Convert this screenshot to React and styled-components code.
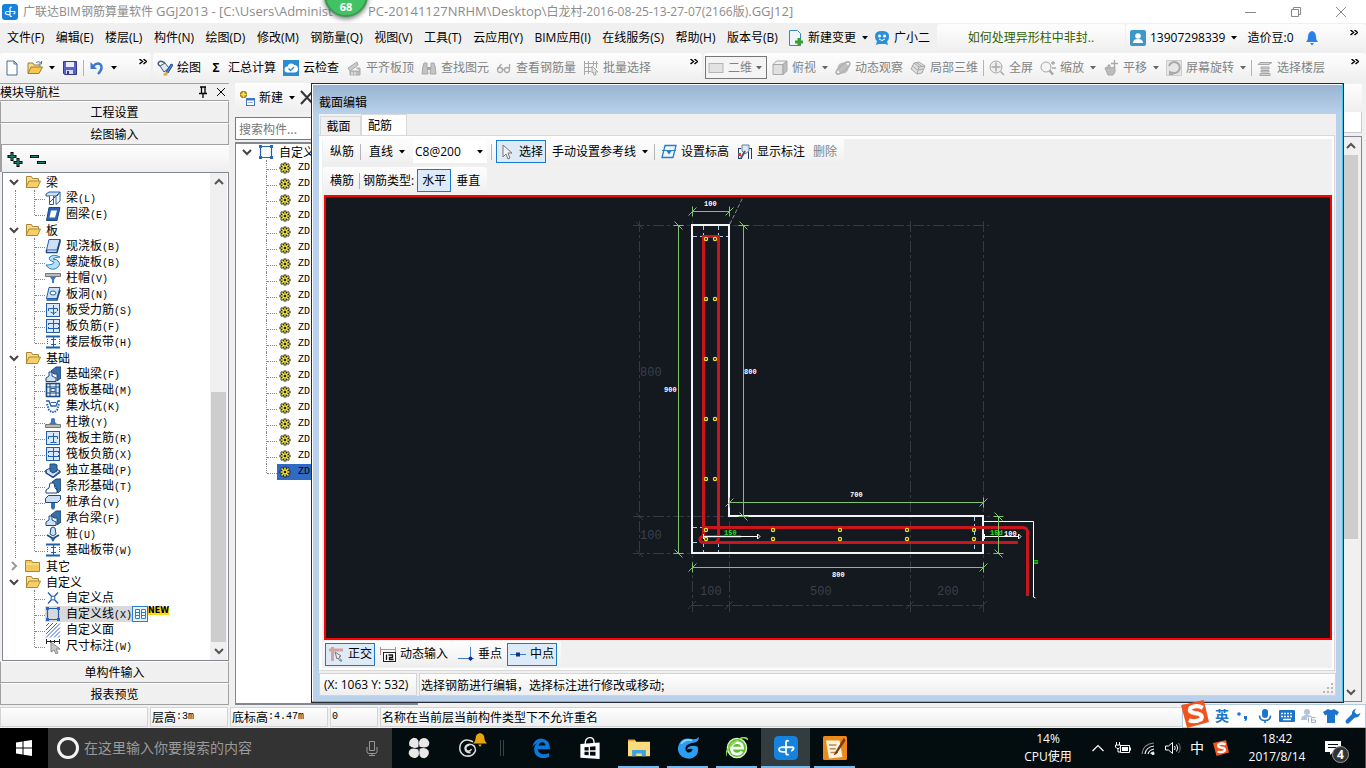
import React from "react";
import styled, { createGlobalStyle } from "styled-components";

const ui = `"Open Sans", "Noto Sans CJK SC", sans-serif`;
const song = `"Noto Sans CJK SC", sans-serif`;
const barFill = "linear-gradient(#fdfdfd, #f7f7f7 50%, #eeeeee)";

const GlobalStyle = createGlobalStyle`
  * { box-sizing: border-box; }
  body { margin: 0; background: #f0f0f0; }
  body, button, input, select { font-family: ${ui}; font-size: 12px; line-height: 16px; color: #000; }
  button { margin: 0; padding: 0; border: 0; background: none; white-space: nowrap; }
  svg { display: block; flex: none; }
  ul { list-style: none; margin: 0; padding: 0; }
`;

/* ---------- icons ---------- */

const B = "#1f5fae";
const D = "#1b4a80";
const L = "#cfe0f6";
const G = "#a8a8a8";

const glyphs = {
  app: (
    <>
      <rect width="16" height="16" rx="3" fill="#1583dd" />
      <path d="M9.800 3.500Q8 2.500 8 4.500V11q0 2 1.800 1.300M13 7.500H5q-2 .5-1.600 2Q4 11 8 10.500M13 7.500q.3 2-1.600 2.500" fill="none" stroke="#fff" strokeWidth="1.200" />
    </>
  ),
  file: (
    <>
      <path d="M3 1h7l3 3v11H3z" fill="#fff" stroke="#4a6a94" />
      <path d="M10 1v3h3" fill="none" stroke="#4a6a94" />
    </>
  ),
  folderOpen: (
    <>
      <path d="M1 13V3h5l1 2h6v3" fill="#f6dc8c" stroke="#a08030" />
      <path d="M1 13.500L4 7h11.500L12 13.500z" fill="#f8c552" stroke="#a08030" />
      <path d="M9 2.500q3-2 5 .5M14.500 1v3h-3" fill="none" stroke="#55749c" />
    </>
  ),
  folder: (
    <>
      <path d="M.5 13.500V2.500h6l1 2h7v9z" fill="#f3c95c" stroke="#a98733" />
      <path d="M1 6h13" stroke="#fdeab0" />
    </>
  ),
  folderTree: (
    <>
      <path d="M1.500 13V2.500h5l1 2h6V7" fill="#f6dc8c" stroke="#a98733" />
      <path d="M1 13.500L4 7h11.500L12.500 13.500z" fill="#f8cf66" stroke="#a98733" />
    </>
  ),
  save: (
    <>
      <path d="M1.500 1.500h13v13h-12l-1-1z" fill="#5b62c9" stroke="#33398a" />
      <path d="M4 2h8v5H4z" fill="#e8ecfb" />
      <path d="M4 10h7v4H4z" fill="#d7dbf2" />
      <path d="M5 11h2v3H5z" fill="#33398a" />
    </>
  ),
  undo: (
    <>
      <path d="M4 6.500q4-4.500 7.500-2 3 4-2.500 9.500" fill="none" stroke="#3d78cf" strokeWidth="2.400" />
      <path d="M1.500 2v7H8z" fill="#3d78cf" />
    </>
  ),
  draw: (
    <>
      <path d="M3 6l5-3 4 5-5 4z" fill="#dfe8f2" stroke="#405d80" />
      <path d="M3 6Q0 4 2 2t6 1" fill="none" stroke="#405d80" strokeWidth="1.500" />
      <path d="M9 12l5-8 2 1-5 8z" fill="#4c86cf" stroke="#27538f" />
      <path d="M6 14.500q2-3 5-2l-1 3q-3 1-4-1z" fill="#e0b13c" />
    </>
  ),
  cloud: (
    <>
      <rect width="16" height="16" fill="#2b8bd3" />
      <path d="M4.500 12.500a3 3 0 010-6 4 4 0 017-1.500 3.800 3.800 0 01.5 7.500z" fill="#fff" />
      <path d="M5.500 8.500l2 2 3.500-3.500" fill="none" stroke="#2b8bd3" strokeWidth="1.300" />
    </>
  ),
  level: (
    <>
      <path d="M2 8l9-6 1 3-8 6z" fill="#ccc" stroke={G} />
      <path d="M4 11h10v4H4zM10 8h4v3" fill="#bbb" stroke={G} />
      <path d="M6 15v-3M9 15v-3" stroke="#eee" />
    </>
  ),
  binoc: (
    <>
      <path d="M3 3h3v3l1 8H1l1-8zM10 3h3l1 3 1 8H9l1-8z" fill="#c4c4c4" stroke={G} />
      <path d="M6 7h4v3H6z" fill={G} />
    </>
  ),
  glasses: (
    <g fill="none" stroke={G} strokeWidth="1.300">
      <circle cx="4" cy="10" r="2.500" />
      <circle cx="11" cy="10" r="2.500" />
      <path d="M6.500 9.500h2M1.500 9l4-5M13.500 9V4" />
    </g>
  ),
  batch: (
    <>
      <path d="M1.500 1v14M5.500 1v13M1 3.500h14M1 7.500h9M1 11.500h7M10.500 1v5M13.500 1v7" stroke={G} fill="none" />
      <path d="M9 6l6 6-3 0 1 3-2 0-1-3-1 1z" fill="#e4e4e4" stroke={G} />
    </>
  ),
  flat: <rect x="1" y="3.500" width="14" height="9" fill="#e2e2e2" stroke="#b5b5b5" />,
  cube: (
    <g stroke={G}>
      <path d="M1 4.500h10v10H1z" fill="#e0e0e0" />
      <path d="M1 4.500L4.500 1H15l-4 3.500z" fill="#f2f2f2" />
      <path d="M11 4.500L15 1v10l-4 3.500z" fill="#bdbdbd" />
    </g>
  ),
  orbit: (
    <>
      <circle cx="8" cy="8" r="5.500" fill="#c0c0c0" />
      <ellipse cx="8" cy="8" rx="8.500" ry="3" transform="rotate(-40 8 8)" fill="none" stroke="#b0b0b0" strokeWidth="1.500" />
    </>
  ),
  local3d: (
    <g stroke={G} fill="#dedede">
      <path d="M1 9l3-6 5-1 6 4-3 7-5 1z" />
      <path d="M4 3l5 4-2 7M9 7l6-1M2.500 6l5 4 6-1M6 2.500l6 4" fill="none" />
    </g>
  ),
  fit: (
    <>
      <circle cx="7" cy="7" r="6" fill="#eee" stroke={G} />
      <path d="M7 2.500v9M2.500 7h9M11.500 11.500L15 15" stroke={G} strokeWidth="1.500" />
    </>
  ),
  zoom: (
    <>
      <circle cx="6" cy="7" r="5" fill="#f4f4f4" stroke={G} />
      <path d="M9.500 10.500L13 14.500" stroke={G} strokeWidth="2.500" />
      <path d="M11 3h4M13 1v4M12 8h4" stroke={G} strokeWidth="1.300" />
    </>
  ),
  pan: (
    <>
      <path d="M2 8l2-1 1 2V5h2v3l5-1v5l-2 3H5z" fill="#bdbdbd" stroke={G} />
      <path d="M8 3.500h7M11.500 0v7" stroke={G} strokeWidth="1.300" />
    </>
  ),
  rotate: (
    <>
      <path d="M.5.5h15v15H.5z" fill="#e6e6e6" stroke="#ccc" />
      <path d="M3 6a5.500 5.500 0 11 2 6" fill="none" stroke={G} strokeWidth="2" />
      <path d="M3 10v5h5z" fill={G} />
    </>
  ),
  floors: (
    <g fill="#d4d4d4" stroke={G}>
      <path d="M3 2.500h12l-3 2H1zM4 7h8v2H4zM4 10.500h8v1.500H4zM3 13.500h10v2H3z" />
    </g>
  ),
  newChange: (
    <>
      <path d="M1.500.5h8l3 3v12h-11z" fill="#eef6fd" stroke="#3b86c4" />
      <path d="M11 8v8M7 12h8" stroke="#3aa02a" strokeWidth="3" />
    </>
  ),
  robot: (
    <>
      <path d="M1 6q0-5 7-5t7 5-2 5l1 4-3-1H5l-3 1 1-4Q1 10 1 6z" fill="#2b90d9" />
      <circle cx="5.500" cy="6" r="1.500" fill="#fff" />
      <circle cx="10.500" cy="6" r="1.500" fill="#fff" />
      <path d="M5 9q3 3 6 0" fill="none" stroke="#fff" />
    </>
  ),
  user: (
    <>
      <rect width="16" height="16" rx="2" fill="#3f96cb" />
      <circle cx="8" cy="6" r="2.800" fill="#fff" />
      <path d="M3 13q0-4 5-4t5 4z" fill="#fff" />
    </>
  ),
  bell: <path d="M8 1q4 1 4 6 0 3 2 5H2q2-2 2-5 0-5 4-6zM6 13h4l-2 2.500z" fill="#2c7fe8" />,
  addItem: (
    <>
      <path d="M4.500 1v7M1 4.500h7" stroke="#806000" strokeWidth="4" />
      <path d="M4.500 1.500v6M1.500 4.500h6" stroke="#ffe14a" strokeWidth="2" />
      <rect x="7.500" y="8.500" width="8" height="7" fill="#fff" stroke="#3f77c2" />
      <path d="M7 9.500h9" stroke="#3f77c2" strokeWidth="2" />
      <path d="M9 12.500h5" stroke="#8ab0e0" />
    </>
  ),
  cross: <path d="M2 1l12 13M14 1L2 14" stroke="#333" strokeWidth="2" fill="none" />,
  frame: (
    <>
      <path d="M2.500 2.500h11v11h-11z" fill="none" stroke={B} strokeWidth="1.200" />
      <path d="M1 1h3v3H1zM12 1h3v3h-3zM1 12h3v3H1zM12 12h3v3h-3z" fill="#2b67c8" />
    </>
  ),
  gear: (
    <>
      <path d="M8 2.500v11M2.500 8h11M4 4l8 8M12 4l-8 8" stroke="#222" strokeWidth="2.600" />
      <circle cx="8" cy="8" r="4.500" fill="#222" />
      <path d="M8 3.500v9M3.500 8h9M4.500 4.500l7 7M11.500 4.500l-7 7" stroke="#f5e63c" strokeWidth="1.500" />
      <circle cx="8" cy="8" r="1.300" fill="#222" />
    </>
  ),
  beam: (
    <>
      <path d="M1 4l3-2h11l-3 4H1z" fill={L} stroke={B} />
      <path d="M4.500 6v8.500h4V6M12 6l3-4v9l-4 3.500V6" fill="#fff" stroke={B} />
      <path d="M5 12l8-8" stroke={B} />
    </>
  ),
  ring: (
    <>
      <path d="M4 1.500h11L12 14.500H1.500z" fill="#2e62b4" stroke={D} />
      <path d="M6 4.500h6L10 11.500H4.500z" fill="#fff" />
    </>
  ),
  slab: (
    <>
      <path d="M4 1.500h11L12 12H1.500z" fill={L} stroke={B} />
      <path d="M1.500 12v2.500H12L15 4V1.500" fill="none" stroke={D} strokeWidth="1.500" />
    </>
  ),
  spiral: <path d="M15 3Q8-1 4 4q0 3 5 4 0 3-8 3 3 5 9 4 6-3 4-7-2-3-6-3 2-2 7-2z" fill="#b5e0f7" stroke="#2a80c4" />,
  cap: (
    <>
      <path d="M.5 3.500h15v3H.5z" fill="#bbb" stroke="#777" />
      <path d="M5 7h6l-2 3v3H7v-3z" fill="#3d78c8" />
    </>
  ),
  hole: (
    <>
      <path d="M4 1.500h11L12 12.500H1.500z" fill={L} stroke={B} />
      <path d="M1.500 14H12l3-10" fill="none" stroke={D} strokeWidth="1.500" />
      <ellipse cx="8" cy="7" rx="3" ry="2" fill="#fff" stroke={B} />
    </>
  ),
  rebarA: (
    <>
      <rect x="1.500" y="1.500" width="13" height="13" fill="#dbe7fa" stroke={B} />
      <path d="M8.500 3v10M3.500 9V6.500h9V9M5.500 10q3 3 6 0" stroke={B} fill="none" />
    </>
  ),
  rebarMain: (
    <>
      <rect x="1.500" y="1.500" width="13" height="13" fill="#dbe7fa" stroke={B} />
      <path d="M8.500 3v9.500h3M3.500 9V6.500h9V9M5.500 12.500h3" stroke={B} fill="none" />
    </>
  ),
  rebarB: (
    <>
      <rect x="1.500" y="1.500" width="13" height="13" fill="#dbe7fa" stroke={B} />
      <path d="M8.500 2v12M3 5.500h11M3 10.500h11M3.500 5v2M13.500 5v2M3.500 9v2M13.500 9v2" stroke={B} fill="none" />
    </>
  ),
  strip: (
    <>
      <path d="M1 2.500h14M1 13.500h14" stroke={B} strokeWidth="2" />
      <path d="M8.500 3v10M6 5.500h5M6 10.500h5" stroke={B} fill="none" />
      <path d="M2.500 5v6M14.500 5v6" stroke={B} strokeDasharray="1 1" />
    </>
  ),
  footing: (
    <>
      <path d="M6 5l5-4h5v11l-4 3V8H9z" fill="#3a6ea8" stroke={D} />
      <path d="M1 15.500V12l3-2V6h3v4l4 2v3.500z" fill={L} stroke={D} />
    </>
  ),
  raft: (
    <>
      <rect x="1.500" y="1.500" width="13" height="13" fill="#e7effa" stroke={D} strokeWidth="1.600" />
      <path d="M5 2v12M11 2v12M2 5h12M2 11h12" stroke={D} />
      <rect x="6" y="6.500" width="4" height="3" fill="#fff" stroke={B} />
    </>
  ),
  pit: (
    <>
      <path d="M1 3h3l2 5h5l2-5h2" fill="none" stroke={B} strokeWidth="1.300" />
      <path d="M2 6l2 6q4 4 8 0l2-6" fill="none" stroke={B} strokeDasharray="1.500 1" strokeWidth="2" />
      <path d="M6 4.500h5" stroke={B} />
    </>
  ),
  pier: (
    <>
      <path d="M.5 10.500h15v3H.5z" fill="#bbb" stroke="#777" />
      <path d="M4 10l2-2V5q2-2 4 0v3l2 2z" fill="#3d78c8" />
    </>
  ),
  isolated: (
    <>
      <path d="M1 8l7-3 7 4-7 6-7-4z" fill={L} stroke={D} />
      <path d="M5 2h5l2 1v6L8 11 5 9z" fill="#3a6ea8" stroke={D} />
      <path d="M1 8v3l7 4.500 7-5V9" fill="none" stroke={D} strokeWidth="1.300" />
    </>
  ),
  stripBase: (
    <>
      <path d="M7 4l4-3h5v11l-3 3-2-6z" fill="#3a6ea8" stroke={D} />
      <path d="M1 15v-3l3-2 1-5h4l1 5 2 2v3z" fill="#fff" stroke={D} />
    </>
  ),
  pileCap: (
    <>
      <path d="M.5 4.500l3-3h12v4l-3 3H.5z" fill={L} stroke={D} />
      <path d="M6 9h4v5l-2 2-2-2z" fill="#3a6ea8" />
    </>
  ),
  pile: (
    <>
      <path d="M6 2q2-2 4 0l1 6-3 2-3-2z" fill={L} stroke={D} />
      <path d="M2 9l6 3.500L14 9" fill="none" stroke={D} strokeWidth="1.800" />
      <path d="M5.500 12h5L8 16z" fill={B} />
    </>
  ),
  pointX: (
    <>
      <path d="M3 2.500l10 11M13 2.500l-10 11" stroke={B} strokeWidth="1.300" />
      <circle cx="8" cy="8" r="2" fill="#fff" stroke={B} />
    </>
  ),
  hatch: <path d="M1 4l3-3M1 8l7-7M1 12l11-11M1 15.500L15 1.500M5 15.500L15 5.500M9 15.500l6-6M13 15.500l2-2" stroke="#2b67c8" />,
  dims: (
    <>
      <path d="M1 3.500h14M1.500 1v5M14.500 1v5M5.500 2v3M9.500 2v3" stroke="#222" />
      <path d="M6 4v10l3-2 2 4 2-1-2-4h4z" fill="#c8c8c8" stroke="#888" />
    </>
  ),
  book: (
    <>
      <rect x=".5" y=".5" width="15" height="15" fill="#e8f3ff" stroke="#2b7dd0" />
      <path d="M3.500 3.500h4v9h-4zM9.500 3.500h4v9h-4z" fill="#fff" stroke="#2b7dd0" />
      <path d="M4 6.500h3M4 9.500h3M10 6.500h3M10 9.500h3" stroke="#2b7dd0" />
    </>
  ),
  cursor: <path d="M4 1v12l3-3 2 5 2-1-2-5h4z" fill="#f2f2f2" stroke="#777" />,
  elev: (
    <>
      <path d="M4 1.500h11l-3 12H1z" fill="#eef6fd" stroke="#2a7cc4" strokeWidth="1.300" />
      <path d="M1 6.500h14" stroke="#2a7cc4" />
      <path d="M5.500 7h5L8 10.500z" fill="#2a7cc4" />
    </>
  ),
  showDim: (
    <>
      <path d="M1.500 4v11M14.500 4v11M11.500 6v9M1 4.500h3M12 4.500h3M1 14.500h4" stroke="#1d3f73" fill="none" />
      <path d="M5 1h7v6l-4 3-3-3z" fill="#dfe7f2" stroke="#6b7d96" />
      <path d="M8 7l-4 7" stroke="#556" strokeWidth="2" />
      <path d="M1 9h3v3H1z" fill="#d43a2f" />
    </>
  ),
  ortho: (
    <>
      <path d="M1 4h14M4.500 1v14" stroke="#dba0a0" strokeWidth="3" />
      <path d="M7 6l6 4-2 1 3 4-2 0-2-3-1 1z" fill="#eee" stroke="#777" />
    </>
  ),
  dynInput: (
    <>
      <path d="M.5 1v8M15.500 1v5M1 3.500h15" stroke="#b09090" />
      <rect x="3.500" y="6.500" width="12" height="9" fill="#fff" stroke="#222" />
      <path d="M6.500 8.500v5.500M8.500 9h4v2.500h-3v2h4" stroke="#111" strokeWidth="1.300" fill="none" />
    </>
  ),
  perp: (
    <>
      <path d="M0 12.500h16M12.500 1v14" stroke="#3c7fc8" />
      <circle cx="12.500" cy="12.500" r="2" fill="#1a2f8c" />
    </>
  ),
  mid: (
    <>
      <path d="M0 8.500h16" stroke="#3c7fc8" />
      <rect x="6" y="6.500" width="4" height="4" fill="#1a2f8c" />
    </>
  ),
  plusTree: (
    <>
      <path d="M5 1v9M.5 5.500h9M11 7v9M6.500 11.500h9" stroke="#000" strokeWidth="3" />
      <path d="M5 2v7M1.500 5.500h7M11 8v7M7.500 11.500h7" stroke="#118070" strokeWidth="1.500" />
    </>
  ),
  minusTree: (
    <>
      <path d="M0 5.500h9M7 11.500h9" stroke="#000" strokeWidth="3" />
      <path d="M1 5.500h7M8 11.500h7" stroke="#118070" strokeWidth="1.500" />
    </>
  ),
  pin: <path d="M5 3h6M6.500 3v6M10 3v6M4 9.500h8M8 10v4" stroke="#000" fill="none" strokeWidth="1.300" />,
  close: <path d="M4 4l8 8M12 4l-8 8" stroke="#000" fill="none" />,
  min: <path d="M2 8.500h11" stroke="#888" />,
  restore: <path d="M3.500 5.500h7v7h-7zM5.500 5V3.500h7v7H11" fill="none" stroke="#888" />,
  quit: <path d="M3 3l10 10M13 3L3 13" stroke="#888" />,
  start: <path d="M0 2.500l6.500-1v6H0zM7.500 1.300L16 0v7.500H7.500zM0 8.500h6.500v6L0 13.600zM7.500 8.500H16V16l-8.500-1.300z" fill="#fff" />,
  mic: <path d="M5.500 1.500h5v9h-5zM3 7v4.500q0 2 2 2h6q2 0 2-2V7M8 13.500V16M5 15.500h6" fill="none" stroke="#999" />,
  fan: (
    <g fill="#e8e8e8">
      <path d="M7.500 7.500Q3 9 1 6q-1-4 3-5.500 5 0 3.500 7z" />
      <path d="M8.500 7Q7 2.500 10 1q4-1 5.500 3 0 5-7 3z" />
      <path d="M8.500 8.500Q13 7 15 10q1 4-3 5.500-5 0-3.500-7z" />
      <path d="M7.500 9Q9 13.500 6 15q-4 1-5.500-3 0-5 7-3z" />
    </g>
  ),
  swirl: (
    <>
      <path d="M12 3Q5-.500 2 5q-2 6 3 9 7 2 9-4 0-5-5-5-4 1-3 4 2 3 5 0" fill="none" stroke="#ddd" strokeWidth="1.200" />
      <path d="M9 5.500q-3 0-3 3t4 3" fill="none" stroke="#ddd" strokeWidth="1.600" />
    </>
  ),
  edge: (
    <path d="M1 7q2-7 8-6.500Q15 1 15.200 9H5.500q.5 3.500 4 4 3 .3 5-1v3q-3 1.500-6 1-6-1-6-7 0-3 2.500-5Q3 5 1 7zm5-1h5.500q0-2.500-2.500-2.700Q6.500 3.500 6 6z" fill="#0c78d8" />
  ),
  store: (
    <>
      <path d="M1 5l14-1v12l-14-1z" fill="#fff" />
      <path d="M4.500 5q0-4 3-4.500Q11 0 11 4.500" fill="none" stroke="#fff" />
      <path d="M4 7.500l3-.3v2.600H4zM8 7l4-.3v3H8zM4 10.700h3v2.600l-3-.3zM8 10.700h4v3l-4-.3z" fill="#030c0f" />
    </>
  ),
  explorer: (
    <>
      <path d="M0 2h5l1 1.500h10V14H0z" fill="#fbdb7c" />
      <path d="M0 2h5v1H0z" fill="#e0a93a" />
      <path d="M3 14V9.500h10V14h-3v-2H6v2z" fill="#3ba3dd" />
    </>
  ),
  gBlue: (
    <>
      <path d="M16 0q-2 2-5 1.500Q4 0 1.500 5-1 11 4 14.500q6 3 10-1 2-3 1-6.500-2-1-5-.5-2 .5-3 2.500 3-1 4.500 0Q10 12 7.500 11 5 9 7 6q3-2 6-2 3-1 3-4z" fill="#2c9df0" />
      <path d="M3 5q3-4 8-2.500" fill="none" stroke="#8fd6ff" strokeWidth="1.200" />
    </>
  ),
  greenE: (
    <>
      <circle cx="8" cy="8" r="7" fill="#5cbf2c" stroke="#dff5cc" />
      <path d="M4 8h8q0-4-4-4T4 8q0 4.500 4 4.500 2.500 0 3.500-2" fill="none" stroke="#fff" strokeWidth="2" />
      <path d="M0 14Q-1 10 6 4t10-2" fill="none" stroke="#86d84e" strokeWidth="1.200" />
    </>
  ),
  notes: (
    <>
      <rect width="16" height="16" rx="1" fill="#ee8a1c" />
      <path d="M2 3h9l2 11-9 1z" fill="#fff4dc" />
      <path d="M4 6h5M4.500 8.500h4M5 11h5" stroke="#b78a50" />
      <path d="M14 1L8 11l-1 2 2-1 6-9z" fill="#7a3b14" />
    </>
  ),
  caretUp: <path d="M2.500 11L8 5.500l5.500 5.500" fill="none" stroke="#fff" strokeWidth="1.200" />,
  battery: (
    <>
      <path d="M5.500 5.500h9v7h-9z" fill="none" stroke="#fff" />
      <path d="M7 7h6v4H7zM15 7.500h1v3h-1z" fill="#fff" />
      <path d="M1.500 2v3M4.500 2v3M.5 5h5v2l-1.500 1.500h-2L.5 7zM3 8v4h2" stroke="#fff" fill="none" />
    </>
  ),
  wifi: (
    <g fill="none" stroke="#eee" strokeWidth="1.200">
      <path d="M2 14Q3 4 14 3" stroke="#888" />
      <path d="M5 14q1-7 9-8M8 14q1-4 6-5M11 14q0-2 3-2" />
      <circle cx="13" cy="13.500" r="1" fill="#fff" />
    </g>
  ),
  volume: (
    <g fill="none" stroke="#fff">
      <path d="M.5 6h3l4-3.500v11L3.500 10h-3zM9.500 6q1.500 2 0 4M11.500 4.500q2.500 3.500 0 7" />
      <path d="M13.500 3q3.500 5 0 10" stroke="#777" />
    </g>
  ),
  sogou: (
    <>
      <path d="M0 3l13-3 3 12.500L3.500 16z" fill="#f0531c" />
      <path d="M12.500 4.500Q9 2.500 5.500 4.500 4 7 8 7.500q5 .5 3.500 3.500Q8 13 4.500 11.500" fill="none" stroke="#fff" strokeWidth="2.400" />
    </>
  ),
  notify: <path d="M0 1h16v11H8l-3 3v-3H0zM3 4v1h10V4zM3 7v1h10V7z" fill="#fff" fillRule="evenodd" />,
  imeMic: (
    <>
      <rect x="5" y="1" width="6" height="9" rx="3" fill="#1d74cc" />
      <path d="M2.500 7.500q0 5 5.500 5t5.500-5M8 12.500V15" fill="none" stroke="#1d74cc" strokeWidth="1.600" />
    </>
  ),
  keyboard: (
    <>
      <rect x="0" y="2" width="16" height="12" rx="1" fill="#1d74cc" />
      <path d="M2 5.500h12M2 8.500h12" stroke="#fff" strokeWidth="1.500" strokeDasharray="2 1" />
      <path d="M4 11.500h8" stroke="#fff" strokeWidth="1.500" />
    </>
  ),
  person: (
    <>
      <circle cx="6" cy="4" r="3" fill="#b5c3d8" />
      <path d="M0 12q0-5 6-5t6 5z" fill="#b5c3d8" />
      <rect x="6" y="9" width="10" height="6" fill="#fff" />
      <path d="M7.500 9.500v5M14.500 9.500h-4v5h4V12h-4" fill="none" stroke="#9fb0c8" />
    </>
  ),
  shirt: <path d="M5 1q3 2 6 0l5 3-2 3.500-2-1V15H4V6.500l-2 1L0 4z" fill="#1d74cc" />,
  wrench: <path d="M1 15q-1-2 0-3l6-6q-.5-4 4-5.500L9.500 4l2.500 2.500L15.500 5q-1.500 5-5.500 4.500L4 15q-1.500 1-3 0z" fill="#1d74cc" />,
  punct: (
    <>
      <circle cx="4" cy="6" r="1.800" fill="#1d74cc" />
      <path d="M9 8h3v3q0 2-3 2 1.500-1 1-2H9z" fill="#1d74cc" />
    </>
  ),
};

const Icon = ({ name, size = 16 }) => (
  <svg width={size} height={size} viewBox="0 0 16 16" aria-hidden="true">
    {glyphs[name]}
  </svg>
);

const Caret = ({ color = "#000" }) => (
  <svg width="6" height="4" viewBox="0 0 6 4" aria-hidden="true">
    <path d="M0 0h6L3 3.500z" fill={color} />
  </svg>
);

const More = () => (
  <svg width="8" height="6" viewBox="0 0 8 6" aria-hidden="true">
    <path d="M.5 0l3 2.500-3 2.500M4.500 0l3 2.500-3 2.500" fill="none" stroke="#000" strokeWidth="1.500" />
  </svg>
);

const Chevron = ({ d, color = "#555" }) => (
  <svg width="10" height="10" viewBox="0 0 10 10" aria-hidden="true">
    <path d={d} fill="none" stroke={color} strokeWidth="2" />
  </svg>
);
const DOWN = "M1 3l4 4 4-4";
const UP = "M1 7l4-4 4 4";
const RIGHT = "M3 1l4 4-4 4";

/* ---------- frame ---------- */

const Page = styled.div`
  display: flex;
  flex-direction: column;
  min-height: 100vh;
  position: relative;
  overflow: hidden;
`;

const TitleBar = styled.header`
  display: flex;
  align-items: center;
  height: 23px;
  padding: 0 17px 0 2px;
  gap: 5px;
  background: #fff;
  color: #8c8c8c;
  white-space: nowrap;
`;

const TitleText = styled.div`
  display: flex;
`;

const TitlePart = styled.span`
  width: ${(p) => (p.$lead ? "345px" : "auto")};
`;

const Latin = styled.span`
  font-size: 13px;
`;

const WindowButtons = styled.div`
  display: flex;
  gap: 29px;
  margin-left: auto;
`;

const SpeedBall = styled.div`
  position: absolute;
  left: 324px;
  top: -27px;
  width: 44px;
  height: 44px;
  padding-top: 26px;
  border: 2px solid #3a9a50;
  border-radius: 50%;
  background: #43c263;
  box-shadow: 0 2px 5px #0008;
  color: #fff;
  font: bold 11px/12px "Open Sans", sans-serif;
  text-align: center;
`;

const MenuBar = styled.nav`
  display: flex;
  align-items: center;
  height: 30px;
  background: #f0f0f0;
`;

const Menus = styled.div`
  display: flex;
  justify-content: space-between;
  padding: 0 8px 0 7px;
  width: 786px;
  flex: none;
`;

const MenuPanel = styled.div`
  display: flex;
  align-items: center;
  flex: ${(p) => (p.$grow ? "1" : "none")};
  width: ${(p) => (p.$grow ? "auto" : "188px")};
  height: 28px;
  gap: 4px;
  margin-left: 1px;
  padding: 0 2px;
  border-radius: 3px;
  background: ${barFill};
`;

const ChangeTools = styled.div`
  display: flex;
  flex: none;
  gap: 2px;
  width: 150px;
`;

const Tool = styled.button`
  display: flex;
  align-items: center;
  flex: none;
  gap: 4px;
  height: 23px;
  padding: 0 ${(p) => (p.$roomy ? "4px" : "2px")};
  border: ${(p) => (p.$boxed ? "1px solid #1979ca" : "0")};
  background: ${(p) => (p.$boxed ? "#dcebf7" : "none")};
  color: ${(p) => (p.$dim ? "#838383" : "#000")};
`;

const CaretSlot = styled.span`
  margin-left: 2px;
`;

const Sigma = styled.b`
  width: 16px;
  text-align: center;
`;

const TipLink = styled.a`
  margin: 0 auto;
  color: #306000;
  text-decoration: none;
`;

const ToolRow = styled.div`
  display: flex;
  height: 30px;
  padding-bottom: 1px;
  gap: 2px;
  background: #f0f0f0;
`;

const ToolGroup = styled.div`
  display: flex;
  align-items: center;
  flex: ${(p) => (p.$grow ? "1" : "none")};
  width: ${(p) => (p.$w ? p.$w + "px" : "auto")};
  gap: ${(p) => p.$gap || 3}px;
  padding: 0 ${(p) => p.$pad || 2}px;
  border-radius: 3px;
  background: ${barFill};
`;

const Sep = styled.span`
  flex: none;
  width: 1px;
  height: 16px;
  background: #b4b4b4;
`;

const PushEnd = styled.span`
  margin-left: auto;
  align-self: flex-start;
  padding: 6px ${(p) => (p.$inset ? "6px" : "2px")} 0 0;
`;

const Combo = styled.label`
  display: flex;
  align-items: center;
  flex: none;
  height: 23px;
  width: ${(p) => p.$w}px;
  padding: 0 4px 0 2px;
  gap: 4px;
  border: ${(p) => (p.$framed ? "1px solid #777" : "0")};
  background: ${(p) => (p.$framed ? "#f4f4f4" : "#fff")};
`;

const Select = styled.select`
  appearance: none;
  flex: 1;
  min-width: 0;
  padding: 0;
  border: 0;
  background: none;
  color: ${(p) => (p.$dim ? "#838383" : "#000")};
`;

const Workspace = styled.main`
  display: flex;
  flex: 1;
  position: relative;
`;

/* ---------- left navigation ---------- */

const NavPane = styled.aside`
  display: flex;
  flex-direction: column;
  flex: none;
  width: 229px;
  padding-bottom: 2px;
  font-family: ${song};
`;

const PaneHeader = styled.div`
  display: flex;
  align-items: center;
  height: 18px;
  border-top: 1px solid #a0a0a0;
  border-bottom: 1px solid #a0a0a0;
`;

const PaneTools = styled.div`
  display: flex;
  align-items: center;
  gap: 2px;
  margin-left: auto;
`;

const NavButton = styled.button`
  height: 22px;
  border: 1px solid #a0a0a0;
  border-top-color: #fff;
  background: #f0f0f0;
  font-family: ${song};
`;

const TreeTools = styled.div`
  display: flex;
  align-items: center;
  height: 27px;
  padding-left: 5px;
  gap: 7px;
  border-left: 2px solid #a0a0a0;
  background: ${barFill};
`;

const TreeBox = styled.div`
  display: flex;
  flex: 1;
  margin-left: 2px;
  padding-right: 1px;
  border: 1px solid #828790;
  background: #fff;
`;

const Tree = styled.ul`
  flex: 1;
  padding: 1px 0 4px;
`;

const Node = styled.li`
  display: flex;
  align-items: center;
  height: 16px;
  line-height: 16px;
  white-space: nowrap;
`;

const Expander = styled.span`
  display: flex;
  flex: none;
  justify-content: center;
  width: 22px;
`;

const Rail = styled.span`
  flex: none;
  width: 19px;
  height: 16px;
  margin-left: 12px;
  border-left: 1px dotted ${(p) => (p.$on ? "#888" : "transparent")};
`;

const Elbow = styled.span`
  flex: none;
  align-self: flex-start;
  width: 11px;
  height: ${(p) => (p.$last ? "9px" : "16px")};
  border-left: 1px dotted #888;

  &::before {
    content: "";
    display: block;
    height: 9px;
    border-bottom: 1px dotted #888;
  }
`;

const NodeLabel = styled.span`
  display: flex;
  align-items: center;
  height: 16px;
  gap: 5px;
  flex: ${(p) => (p.$wide ? "1" : "none")};
  background: ${(p) => p.$fill || "none"};
`;

const Key = styled.span`
  font: 10px/16px "Liberation Mono", monospace;
`;

const NewTag = styled.b`
  align-self: flex-start;
  height: 8px;
  margin-top: 1px;
  background: #ffd91f;
  font: bold 8px/8px "DejaVu Sans", sans-serif;
`;

const Scroll = styled.div`
  display: flex;
  flex-direction: column;
  align-items: center;
  justify-content: space-between;
  flex: none;
  width: 17px;
  padding: 4px 0;
  gap: 4px;
  background: #f0f0f0;
`;

const Thumb = styled.span`
  flex: none;
  width: 15px;
  height: ${(p) => p.$share};
  margin-top: ${(p) => (p.$end ? "auto" : "0")};
  margin-bottom: ${(p) => (p.$end ? "0" : "auto")};
  background: #cdcdcd;
`;

const nav = [
  { label: "梁", rail: true, items: [["beam", "梁", "(L)"], ["ring", "圈梁", "(E)"]] },
  {
    label: "板",
    rail: true,
    items: [
      ["slab", "现浇板", "(B)"], ["spiral", "螺旋板", "(B)"], ["cap", "柱帽", "(V)"], ["hole", "板洞", "(N)"],
      ["rebarA", "板受力筋", "(S)"], ["rebarB", "板负筋", "(F)"], ["strip", "楼层板带", "(H)"],
    ],
  },
  {
    label: "基础",
    rail: true,
    items: [
      ["footing", "基础梁", "(F)"], ["raft", "筏板基础", "(M)"], ["pit", "集水坑", "(K)"], ["pier", "柱墩", "(Y)"],
      ["rebarMain", "筏板主筋", "(R)"], ["rebarB", "筏板负筋", "(X)"], ["isolated", "独立基础", "(P)"],
      ["stripBase", "条形基础", "(T)"], ["pileCap", "桩承台", "(V)"], ["footing", "承台梁", "(F)"],
      ["pile", "桩", "(U)"], ["strip", "基础板带", "(W)"],
    ],
  },
  { label: "其它", closed: true, items: [] },
  {
    label: "自定义",
    items: [
      ["pointX", "自定义点", ""], ["frame", "自定义线", "(X)", true],
      ["hatch", "自定义面", ""], ["dims", "尺寸标注", "(W)"],
    ],
  },
];

const NavTree = () => (
  <Tree>
    {nav.map((g) => (
      <React.Fragment key={g.label}>
        <Node>
          <Expander>
            <Chevron d={g.closed ? RIGHT : DOWN} color={g.closed ? "#999" : "#444"} />
          </Expander>
          <NodeLabel>
            <Icon name={g.closed ? "folder" : "folderTree"} />
            {g.label}
          </NodeLabel>
        </Node>
        {g.items.map(([icon, text, key, active], i) => (
          <Node key={text}>
            <Rail $on={g.rail} />
            <Elbow $last={i === g.items.length - 1} />
            <NodeLabel $fill={active && "#d9d9d9"}>
              <Icon name={icon} />
              <span>{text}<Key>{key}</Key></span>
            </NodeLabel>
            {active && (
              <>
                <Icon name="book" />
                <NewTag>NEW</NewTag>
              </>
            )}
          </Node>
        ))}
      </React.Fragment>
    ))}
  </Tree>
);

/* ---------- component list ---------- */

const ListPane = styled.section`
  display: flex;
  flex-direction: column;
  flex: none;
  width: 183px;
  margin-left: 6px;
  padding-bottom: 2px;
  font-family: ${song};
`;

const ListTools = styled.div`
  display: flex;
  align-items: center;
  height: 29px;
  margin-bottom: 5px;
  padding-left: 2px;
  background: ${barFill};
`;

const SearchBox = styled.input`
  height: 23px;
  margin-bottom: 2px;
  padding: 0 3px;
  border: 1px solid #7a7a7a;
  background: #fff;
  font-family: ${song};
  &::placeholder { color: #777; opacity: 1; }
`;

const ListBox = styled.ul`
  flex: 1;
  border: 1px solid #828790;
  border-width: 2px 1px;
  background: #fff;
`;

const ListRail = styled.span`
  width: 30px;
  flex: none;
`;

/* ---------- right of the dialog ---------- */

const ViewPane = styled.section`
  display: flex;
  flex-direction: column;
  flex: 1;
  padding: 1px 4px 5px 2px;
`;

const ViewBar = styled.div`
  height: 28px;
  background: ${barFill};
`;

const ViewStrip = styled.div`
  height: 21px;
  margin-bottom: 3px;
  border-right: 1px solid #ccc;
  border-bottom: 1px solid #ccc;
  background: #fff;
`;

const ViewBox = styled.div`
  display: flex;
  flex: 1;
  justify-content: flex-end;
  padding-right: 2px;
  border: 1px solid #828790;
`;

/* ---------- dialog ---------- */

const Dialog = styled.section`
  position: absolute;
  top: 0;
  bottom: 4px;
  left: 311px;
  right: 22px;
  display: flex;
  flex-direction: column;
  padding: 0 7px 6px;
  border: 1px solid #262b33;
  background: #b9d1ea;
  box-shadow: inset -1px -1px #48c6e8, inset 1px 1px #fff;
`;

const DialogTitle = styled.h1`
  margin: 1px -6px 0;
  height: 29px;
  padding: 10px 6px 0;
  background: linear-gradient(#98b4d2, #b9d1ea);
  font-size: 12px;
  font-weight: normal;
  line-height: 16px;
`;

const DialogBody = styled.div`
  display: flex;
  flex-direction: column;
  flex: 1;
  min-height: 0;
  background: #f0f0f0;
`;

const Tabs = styled.div`
  display: flex;
  align-items: flex-end;
  height: 21px;
  padding-left: 1px;
`;

const Tab = styled.button`
  width: ${(p) => (p.$on ? "46px" : "41px")};
  height: ${(p) => (p.$on ? "21px" : "19px")};
  padding: 0 ${(p) => (p.$on ? "8px" : "4px")} 0 0;
  border: 1px solid #d9d9d9;
  border-bottom: 0;
  background: ${(p) => (p.$on ? "#fff" : "#f0f0f0")};
  font-family: ${song};
`;

const Pane = styled.div`
  display: flex;
  flex-direction: column;
  flex: 1;
  min-height: 0;
  margin-right: 1px;
  padding: 1px 1px 0 2px;
  border: 1px solid #d9d9d9;
  border-width: 1px 1px 1px 0;
  box-shadow: inset 3px 3px #fff, inset -2px -2px #fff;
`;

const PaneRow = styled.div`
  display: flex;
  flex: none;
  height: ${(p) => (p.$foot ? "30px" : "29px")};
  padding: ${(p) => (p.$foot ? "1px 2px 3px" : "1px 2px")};
`;

const Caption = styled.span`
  white-space: nowrap;
`;

const Canvas = styled.div`
  flex: 1;
  min-height: 0;
  margin: 0 1px 0 3px;
  border: 2px solid #f00;
  background: #14181f;
  svg { width: 100%; height: 100%; }
`;

const DialogStatus = styled.footer`
  display: flex;
  align-items: stretch;
  gap: 2px;
  height: 25px;
  padding-top: 2px;
`;

const Cell = styled.span`
  display: flex;
  align-items: center;
  flex: ${(p) => (p.$w ? "none" : "1")};
  width: ${(p) => (p.$w ? p.$w + "px" : "auto")};
  padding-left: ${(p) => p.$pad || 1}px;
  border: 1px solid #d4d4d4;
  background: ${barFill};
  font-family: ${(p) => (p.$latin ? ui : song)};
  white-space: nowrap;
`;

const Grip = styled.span`
  margin: auto 2px 2px auto;
`;

/* ---------- drawing ---------- */

const Num = styled.text`
  font: ${(p) => (p.$big ? "12px" : "bold 7px")} "Liberation Mono", monospace;
  fill: ${(p) => p.$c || "#fff"};
`;

const DimH = ({ x1, x2, y }) => (
  <path
    d={`M${x1} ${y}H${x2}M${x1} ${y - 5}v10M${x2} ${y - 5}v10M${x1 - 4} ${y + 4}l8-8M${x2 - 4} ${y + 4}l8-8`}
    stroke="#7fc468"
    fill="none"
  />
);

const DimV = ({ y1, y2, x }) => (
  <path
    d={`M${x} ${y1}V${y2}M${x - 5} ${y1}h10M${x - 5} ${y2}h10M${x - 4} ${y1 - 4}l8 8M${x - 4} ${y2 - 4}l8 8`}
    stroke="#7fc468"
    fill="none"
  />
);

const uprightDots = [239, 299, 359, 419, 479].flatMap((y) => [[706, y], [715, y]]);
const baseDots = [706, 773, 840, 907, 974].flatMap((x) => [[x, 530], [x, 539]]);

const SectionDrawing = () => (
  <svg viewBox="326 197 1004 440" preserveAspectRatio="xMidYMin meet" role="img" aria-label="截面配筋图">
    <path
      d="M633 225.500H989M633 516.500H1000M633 553.500H1000M692 605.500H985M639.500 221V556M692.500 221V612M729.500 221V612M910.500 221V612M983.500 221V612"
      stroke="#343a45"
      strokeDasharray="11 3 3 3"
      fill="none"
    />
    <path d="M688 609l8-8M725 609l8-8M906 609l8-8M979 609l8-8M636 222l7 7M636 513l7 7M636 550l7 7" stroke="#343a45" />
    <path d="M730 224L743 197" stroke="#888" strokeDasharray="4 2" />
    <path
      d="M703.500 226v10M718.500 226v10M693 236.500h10M719 236.500h10M693 527.500h10M693 542.500h10M703.500 543v10M718.500 543v10M974.500 517v36"
      stroke="#a8cdf0"
      strokeDasharray="4 3"
    />
    <path d="M692 225H729V516H983V553H692Z" fill="none" stroke="#f4f4f4" strokeWidth="2" />
    <g fill="none" stroke="#c9151c" strokeWidth="3">
      <path d="M703.500 527V236.500H718.500V538q0 3-3 3.500" />
      <path d="M703.500 527.500H1023q4.500 0 4.500 5V596" />
      <path d="M703.500 527V536.500M741 536.500H704q-4 0-4 3t4 3H1018" />
    </g>
    <g fill="#222" stroke="#f4e32c" strokeWidth="1.200">
      {[...uprightDots, ...baseDots].map(([x, y]) => (
        <circle key={`${x}-${y}`} cx={x} cy={y} r="1.600" />
      ))}
    </g>
    <path
      d="M703 536.500H758M703.500 534v5M757.500 534v5l2.500-2.500zM984 536.500H1019M984.500 534v5M1018.500 534v5l2.500-2.500zM984 521.500H1033.500V597l2 1"
      fill="none"
      stroke="#fff"
    />
    <DimH x1={692.5} x2={729.5} y={211.5} />
    <DimH x1={729.5} x2={983.5} y={502.5} />
    <DimH x1={692.5} x2={983.5} y={567.5} />
    <DimV y1={225.5} y2={553.5} x={678.5} />
    <DimV y1={225.5} y2={516.5} x={743.5} />
    <DimV y1={516.5} y2={553.5} x={998.5} />
    <Num x="704" y="206">100</Num>
    <Num x="664" y="392">900</Num>
    <Num x="744" y="374">800</Num>
    <Num x="850" y="497">700</Num>
    <Num x="832" y="577">800</Num>
    <Num x="1004" y="536">100</Num>
    <Num x="724" y="535" $c="#1ee01e">150</Num>
    <Num x="990" y="535" $c="#1ee01e">15d</Num>
    <Num x="1034" y="560" $c="#1ee01e" transform="rotate(90 1034 560)">m</Num>
    <Num $big x="640" y="376" $c="#3a404b">800</Num>
    <Num $big x="640" y="539" $c="#3a404b">100</Num>
    <Num $big x="700" y="595" $c="#3a404b">100</Num>
    <Num $big x="810" y="595" $c="#3a404b">500</Num>
    <Num $big x="937" y="595" $c="#3a404b">200</Num>
  </svg>
);

/* ---------- bottom bars ---------- */

const StatusBar = styled.footer`
  display: flex;
  gap: 2px;
  height: 21px;
  padding-bottom: 1px;
  background: #f0f0f0;
`;

const ImeBar = styled.div`
  position: absolute;
  right: 0;
  bottom: 40px;
  display: flex;
  align-items: center;
  width: 184px;
  height: 24px;
  padding-right: 4px;
  gap: 6px;
  border: 1px solid #b5cadf;
  background: #fff;
`;

const ImeBadge = styled.span`
  margin: -4px 0 0 -2px;
`;

const ImeMode = styled.b`
  color: #1d74cc;
  font-size: 14px;
`;

const Taskbar = styled.footer`
  display: flex;
  height: 40px;
  background: #030c0f;
  color: #fff;
`;

const Start = styled.button`
  display: grid;
  place-items: center;
  flex: none;
  width: 48px;
  background: #000;
`;

const TaskSearch = styled.label`
  display: flex;
  align-items: center;
  flex: none;
  width: 344px;
  padding: 0 12px 0 9px;
  gap: 5px;
  background: #333;
`;

const Cortana = styled.span`
  flex: none;
  width: 22px;
  height: 22px;
  border: 3px solid #f4f4f4;
  border-radius: 50%;
`;

const TaskInput = styled.input`
  flex: 1;
  min-width: 0;
  padding: 0;
  border: 0;
  background: none;
  font-size: 14px;
  line-height: 20px;
  &::placeholder { color: #9a9a9a; opacity: 1; }
`;

const TaskButton = styled.button`
  display: grid;
  place-items: center;
  flex: none;
  position: relative;
  width: 49px;
  background: ${(p) => (p.$on ? "#333d40" : "none")};

  &::after {
    content: "";
    position: absolute;
    bottom: 0;
    left: ${(p) => (p.$on ? "0" : "4px")};
    right: ${(p) => (p.$on ? "0" : "4px")};
    height: 2px;
    background: ${(p) => (p.$open ? "#76b9ed" : "none")};
  }
`;

const TaskList = styled.div`
  display: flex;
  padding-left: ${(p) => (p.$pad ? "12px" : "2px")};
`;

const BellBadge = styled.span`
  position: absolute;
  right: 5px;
  top: 5px;
`;

const Tray = styled.div`
  display: flex;
  align-items: center;
  gap: 9px;
  margin-left: auto;
`;

const TrayText = styled.div`
  width: ${(p) => (p.$wide ? "66px" : "64px")};
  margin-left: ${(p) => (p.$wide ? "0" : "7px")};
  line-height: 18px;
  text-align: center;
`;

const TrayMode = styled.span`
  font-size: 14px;
`;

const Notice = styled.button`
  position: relative;
  width: 48px;
  height: 40px;
  padding-left: 7px;
  border-right: 1px solid #555;
`;

const Count = styled.span`
  position: absolute;
  right: 16px;
  bottom: 5px;
  width: 17px;
  height: 17px;
  border: 1px solid #999;
  border-radius: 50%;
  background: #333;
  color: #fff;
  font-weight: bold;
  line-height: 15px;
`;

const TaskRule = styled.span`
  align-self: center;
  width: 4px;
  height: 16px;
  margin-left: 8px;
  border: 1px solid #3a4244;
  border-width: 0 1px;
`;

const menus = [
  "文件(F)", "编辑(E)", "楼层(L)", "构件(N)", "绘图(D)", "修改(M)", "钢筋量(Q)", "视图(V)",
  "工具(T)", "云应用(Y)", "BIM应用(I)", "在线服务(S)", "帮助(H)", "版本号(B)",
];

const T = ({ icon, children, dim, boxed, roomy, caret, label }) => (
  <Tool $dim={dim} $boxed={boxed} $roomy={roomy} aria-label={label}>
    {icon && <Icon name={icon} />}
    {children}
    {caret && <CaretSlot><Caret color={dim ? "#666" : "#000"} /></CaretSlot>}
  </Tool>
);

export default function App() {
  return (
    <Page>
      <GlobalStyle />
      <TitleBar>
        <Icon name="app" />
        <TitleText>
          <TitlePart $lead>广联达BIM钢筋算量软件 <Latin>GGJ2013 - [C:\Users\Administ</Latin></TitlePart>
          <TitlePart>
            <Latin>PC-20141127NRHM\Desktop\</Latin>白龙村-2016-08-25-13-27-07(2166版)<Latin>.GGJ12]</Latin>
          </TitlePart>
        </TitleText>
        <WindowButtons>
          <button aria-label="最小化"><Icon name="min" /></button>
          <button aria-label="还原"><Icon name="restore" /></button>
          <button aria-label="关闭"><Icon name="quit" /></button>
        </WindowButtons>
      </TitleBar>
      <SpeedBall>68</SpeedBall>

      <MenuBar>
        <Menus>{menus.map((m) => <button key={m}>{m}</button>)}</Menus>
        <ChangeTools>
          <T icon="newChange" caret>新建变更</T>
          <T icon="robot">广小二</T>
        </ChangeTools>
        <MenuPanel><TipLink href="#tip">如何处理异形柱中非封..</TipLink></MenuPanel>
        <MenuPanel $grow>
          <T icon="user" caret>13907298339</T>
          <T roomy>造价豆:0</T>
          <T icon="bell" label="消息" />
          <PushEnd $inset><More /></PushEnd>
        </MenuPanel>
      </MenuBar>

      <ToolRow>
        <ToolGroup $w="151">
          <T icon="file" label="新建文件" />
          <T icon="folderOpen" caret label="打开" />
          <T icon="save" label="保存" />
          <Sep />
          <T icon="undo" caret label="撤销" />
          <PushEnd><More /></PushEnd>
        </ToolGroup>
        <ToolGroup $w="549">
          <T icon="draw">绘图</T>
          <T><Sigma>Σ</Sigma>汇总计算</T>
          <T icon="cloud">云检查</T>
          <T icon="level" dim>平齐板顶</T>
          <T icon="binoc" dim>查找图元</T>
          <T icon="glasses" dim>查看钢筋量</T>
          <T icon="batch" dim>批量选择</T>
          <PushEnd><More /></PushEnd>
        </ToolGroup>
        <ToolGroup $grow $pad="1">
          <Combo $w="62" $framed>
            <Icon name="flat" />
            <Select $dim aria-label="视图模式"><option>二维</option></Select>
            <Caret color="#666" />
          </Combo>
          <T icon="cube" dim caret>俯视</T>
          <T icon="orbit" dim>动态观察</T>
          <T icon="local3d" dim>局部三维</T>
          <Sep />
          <T icon="fit" dim>全屏</T>
          <T icon="zoom" dim caret>缩放</T>
          <T icon="pan" dim caret>平移</T>
          <T icon="rotate" dim caret>屏幕旋转</T>
          <Sep />
          <T icon="floors" dim>选择楼层</T>
          <PushEnd $inset><More /></PushEnd>
        </ToolGroup>
      </ToolRow>

      <Workspace>
        <NavPane>
          <PaneHeader>
            模块导航栏
            <PaneTools>
              <button aria-label="固定"><Icon name="pin" /></button>
              <button aria-label="关闭面板"><Icon name="close" /></button>
            </PaneTools>
          </PaneHeader>
          <NavButton>工程设置</NavButton>
          <NavButton>绘图输入</NavButton>
          <TreeTools>
            <button aria-label="全部展开"><Icon name="plusTree" /></button>
            <button aria-label="全部折叠"><Icon name="minusTree" /></button>
          </TreeTools>
          <TreeBox>
            <NavTree />
            <Scroll>
              <Chevron d={UP} />
              <Thumb $share="250px" $end />
              <Chevron d={DOWN} />
            </Scroll>
          </TreeBox>
          <NavButton>单构件输入</NavButton>
          <NavButton>报表预览</NavButton>
        </NavPane>

        <ListPane>
          <ListTools>
            <T icon="addItem" caret>新建</T>
            <T icon="cross" label="删除构件" />
          </ListTools>
          <SearchBox placeholder="搜索构件..." aria-label="搜索构件" />
          <ListBox>
            <Node>
              <Expander><Chevron d={DOWN} color="#444" /></Expander>
              <NodeLabel><Icon name="frame" />自定义</NodeLabel>
            </Node>
            {Array.from({ length: 20 }, (_, i) => (
              <Node key={i}>
                <ListRail />
                <Elbow $last={i === 19} />
                <NodeLabel $wide $fill={i === 19 && "#316ac5"}>
                  <Icon name="gear" />
                  <Key>ZD</Key>
                </NodeLabel>
              </Node>
            ))}
          </ListBox>
        </ListPane>

        <ViewPane>
          <ViewBar />
          <ViewStrip />
          <ViewBox>
            <Scroll>
              <Chevron d={UP} />
              <Thumb $share="384px" />
              <Chevron d={DOWN} />
            </Scroll>
          </ViewBox>
        </ViewPane>

        <Dialog aria-label="截面编辑">
          <DialogTitle>截面编辑</DialogTitle>
          <DialogBody>
            <Tabs>
              <Tab>截面</Tab>
              <Tab $on>配筋</Tab>
            </Tabs>
            <Pane>
              <PaneRow>
                <ToolGroup $pad="5" $gap="4">
                  <T>纵筋</T>
                  <Sep />
                  <T roomy caret>直线</T>
                  <Combo $w="74">
                    <Select aria-label="钢筋规格"><option>C8@200</option></Select>
                    <Caret />
                  </Combo>
                  <Sep />
                  <T icon="cursor" boxed>选择</T>
                  <T caret>手动设置参考线</T>
                  <Sep />
                  <T icon="elev">设置标高</T>
                  <T icon="showDim">显示标注</T>
                  <T dim>删除</T>
                </ToolGroup>
              </PaneRow>
              <PaneRow>
                <ToolGroup $pad="5">
                  <T>横筋</T>
                  <Sep />
                  <Caption>钢筋类型:</Caption>
                  <T boxed roomy>水平</T>
                  <T>垂直</T>
                </ToolGroup>
              </PaneRow>
              <Canvas><SectionDrawing /></Canvas>
              <PaneRow $foot>
                <ToolGroup $pad="2">
                  <T icon="ortho" boxed>正交</T>
                  <T icon="dynInput">动态输入</T>
                </ToolGroup>
                <ToolGroup $pad="4">
                  <T icon="perp">垂点</T>
                  <T icon="mid" boxed>中点</T>
                </ToolGroup>
              </PaneRow>
            </Pane>
            <DialogStatus>
              <Cell $w="98" $latin $pad="4">(X: 1063 Y: 532)</Cell>
              <Cell>
                选择钢筋进行编辑，选择标注进行修改或移动;
                <Grip>
                  <svg width="10" height="10" viewBox="0 0 10 10" aria-hidden="true">
                    <path d="M8 0h2v2H8zM4 4h2v2H4zM8 4h2v2H8zM0 8h2v2H0zM4 8h2v2H4zM8 8h2v2H8z" fill="#b8b8b8" />
                  </svg>
                </Grip>
              </Cell>
            </DialogStatus>
          </DialogBody>
        </Dialog>
      </Workspace>

      <StatusBar>
        <Cell $w="148" />
        <Cell $w="78">层高<Key>:3m</Key></Cell>
        <Cell $w="98">底标高<Key>:4.47m</Key></Cell>
        <Cell $w="48"><Key>0</Key></Cell>
        <Cell>名称在当前层当前构件类型下不允许重名</Cell>
      </StatusBar>

      <ImeBar>
        <ImeBadge><Icon name="sogou" size={28} /></ImeBadge>
        <ImeMode>英</ImeMode>
        <Icon name="punct" />
        <Icon name="imeMic" />
        <Icon name="keyboard" />
        <Icon name="person" />
        <Icon name="shirt" />
        <Icon name="wrench" />
      </ImeBar>

      <Taskbar>
        <Start aria-label="开始"><Icon name="start" /></Start>
        <TaskSearch>
          <Cortana />
          <TaskInput placeholder="在这里输入你要搜索的内容" />
          <Icon name="mic" />
        </TaskSearch>
        <TaskList>
          <TaskButton aria-label="风扇"><Icon name="fan" size={22} /></TaskButton>
          <TaskButton aria-label="提醒">
            <Icon name="swirl" size={20} />
            <BellBadge>
              <svg width="14" height="14" viewBox="0 0 16 16" aria-hidden="true">
                <path d="M8 0q5 1 5 6 0 4 3 6H0q3-2 3-6 0-5 5-6zM6 13h4l-2 3z" fill="#e8a50c" />
              </svg>
            </BellBadge>
          </TaskButton>
        </TaskList>
        <TaskRule />
        <TaskList $pad>
          <TaskButton aria-label="Edge"><Icon name="edge" size={20} /></TaskButton>
          <TaskButton aria-label="应用商店"><Icon name="store" size={22} /></TaskButton>
          <TaskButton $open aria-label="文件资源管理器"><Icon name="explorer" size={22} /></TaskButton>
          <TaskButton $open aria-label="浏览器"><Icon name="gBlue" size={22} /></TaskButton>
          <TaskButton $open aria-label="安全浏览器"><Icon name="greenE" size={22} /></TaskButton>
          <TaskButton $open $on aria-label="广联达"><Icon name="app" size={24} /></TaskButton>
          <TaskButton $open aria-label="笔记"><Icon name="notes" size={24} /></TaskButton>
        </TaskList>
        <Tray>
          <TrayText $wide>14%<br />CPU使用</TrayText>
          <Icon name="caretUp" />
          <Icon name="battery" />
          <Icon name="wifi" />
          <Icon name="volume" />
          <TrayMode>中</TrayMode>
          <Icon name="sogou" />
          <TrayText>18:42<br />2017/8/14</TrayText>
          <Notice aria-label="通知">
            <Icon name="notify" />
            <Count>4</Count>
          </Notice>
        </Tray>
      </Taskbar>
    </Page>
  );
}
